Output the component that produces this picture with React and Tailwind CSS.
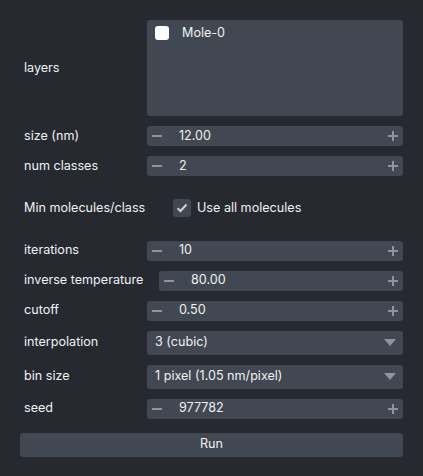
import React from 'react';

const font = { fontFamily: 'Inter, "Noto Sans", sans-serif' };

const Label = ({ children }) => (
  <div className="w-[111px] shrink-0 pl-1 whitespace-nowrap">{children}</div>
);

const SpinBox = ({ value }) => (
  <div className="flex h-5 flex-1 items-center rounded-[3px] bg-[#414851]">
    <span className="ml-[5px] h-[2px] w-[10px] bg-[#8f959e]" />
    <span className="ml-[17px] flex-1">{value}</span>
    <span className="relative mr-[5px] h-[10px] w-[10px]">
      <span className="absolute left-0 top-[4px] h-[2px] w-[10px] bg-[#8f959e]" />
      <span className="absolute left-[4px] top-0 h-[10px] w-[2px] bg-[#8f959e]" />
    </span>
  </div>
);

const Dropdown = ({ value }) => (
  <div className="flex h-6 flex-1 items-center rounded-[3px] bg-[#414851] pl-2 pr-[7px]">
    <span className="flex-1">{value}</span>
    <svg width="12" height="7" viewBox="0 0 12 7">
      <path d="M0 0 L12 0 L6 7 Z" fill="#8f959e" />
    </svg>
  </div>
);

const Row = ({ label, children, className = '' }) => (
  <div className={`flex items-center gap-4 ${className}`}>
    <Label>{label}</Label>
    {children}
  </div>
);

export default function App() {
  return (
    <div
      className="h-[476px] w-[423px] bg-[#262930] px-5 pt-5 text-[12.6px] text-[#f0f1f2]"
      style={font}
    >
      <Row label="layers">
        <div className="h-24 flex-1 rounded-[3px] bg-[#414851] px-2 py-1">
          <div className="flex items-center gap-[13px]">
            <span className="h-[14px] w-[14px] rounded-[3px] bg-white" />
            <span>Mole-0</span>
          </div>
        </div>
      </Row>

      <Row label="size (nm)" className="mt-[10px]">
        <SpinBox value="12.00" />
      </Row>
      <Row label="num classes" className="mt-[10px]">
        <SpinBox value="2" />
      </Row>

      <div className="mt-[23px] flex items-center">
        <Label>Min molecules/class</Label>
        <div className="ml-[42px] flex items-center gap-[6px]">
          <span className="flex h-[18px] w-[18px] items-center justify-center rounded-[3px] bg-[#414851]">
            <svg width="12" height="10" viewBox="0 0 12 10">
              <path
                d="M1.5 5.2 L4.5 8 L10.5 1.5"
                fill="none"
                stroke="#d1d2d4"
                strokeWidth="2"
              />
            </svg>
          </span>
          <span>Use all molecules</span>
        </div>
      </div>

      <Row label="iterations" className="mt-[23px]">
        <SpinBox value="10" />
      </Row>
      <div className="mt-[10px] flex items-center">
        <Label>inverse temperature</Label>
        <div className="ml-[28px] flex flex-1">
          <SpinBox value="80.00" />
        </div>
      </div>
      <Row label="cutoff" className="mt-[10px]">
        <SpinBox value="0.50" />
      </Row>

      <Row label="interpolation" className="mt-[10px]">
        <Dropdown value="3 (cubic)" />
      </Row>
      <Row label="bin size" className="mt-[10px]">
        <Dropdown value="1 pixel (1.05 nm/pixel)" />
      </Row>
      <Row label="seed" className="mt-[10px]">
        <SpinBox value="977782" />
      </Row>

      <button className="mt-[14px] flex h-6 w-full items-center justify-center rounded-[3px] bg-[#414851]">
        Run
      </button>
    </div>
  );
}
